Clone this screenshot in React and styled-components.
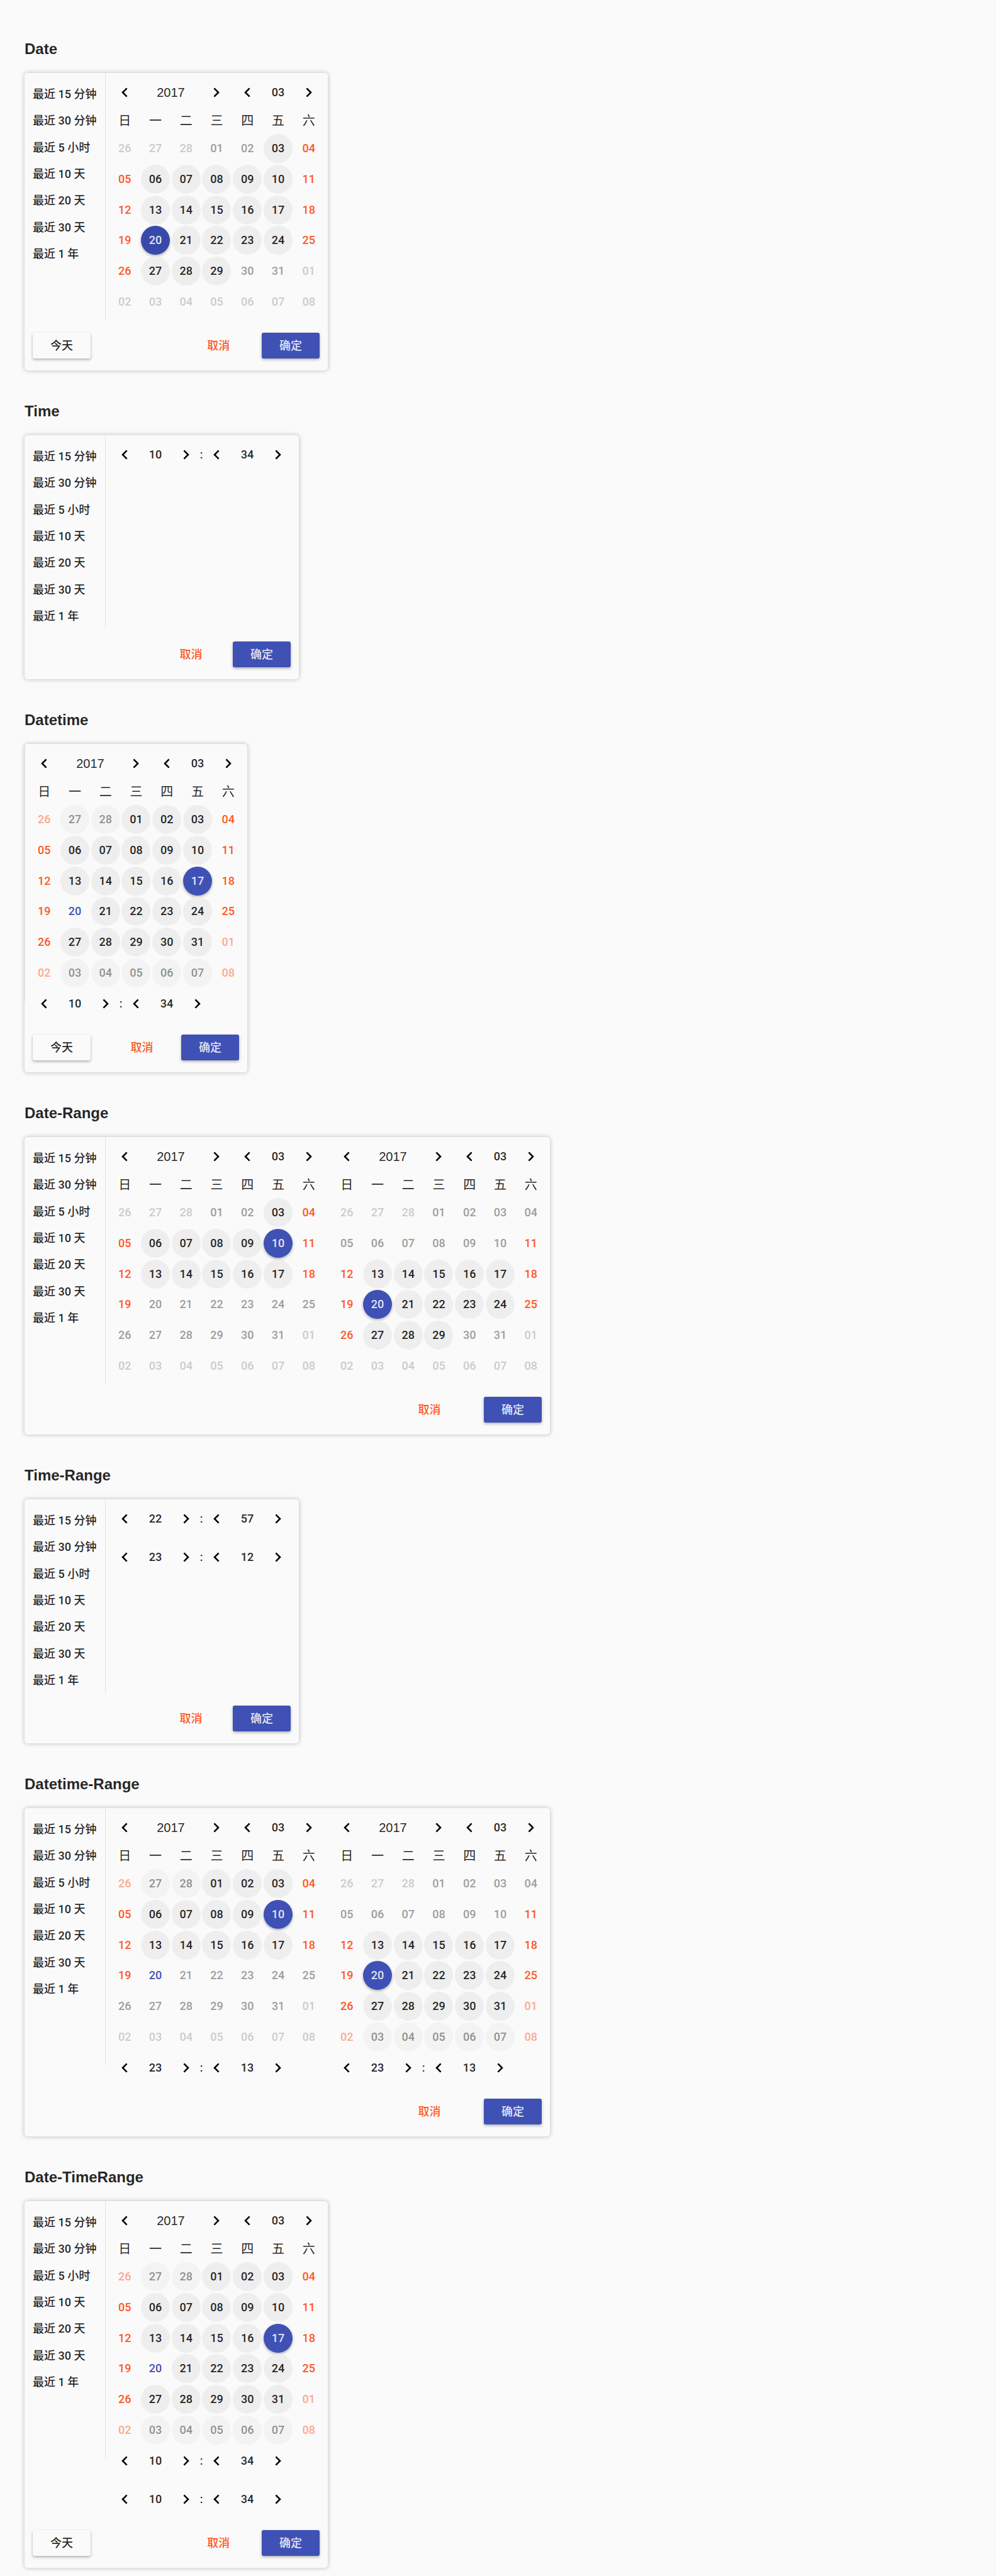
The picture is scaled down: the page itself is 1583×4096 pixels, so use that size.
import React, { useState } from "react";
import styled, { createGlobalStyle, css } from "styled-components";

const GlobalStyle = createGlobalStyle`
  *, *::before, *::after { box-sizing: border-box; }
  body {
    margin: 0;
    background: #fafafa;
    color: rgba(0, 0, 0, 0.87);
    font-family: Roboto, "Noto Sans CJK SC", sans-serif;
    font-size: 18px;
    font-weight: 500;
  }
  button {
    font: inherit;
    color: inherit;
    background: none;
    border: 0;
    padding: 0;
    cursor: pointer;
  }
`;

const Page = styled.main`
  display: flex;
  flex-direction: column;
  gap: 42px;
  padding: 55px 39px 13px;
`;

const Section = styled.section`
  display: flex;
  flex-direction: column;
  align-items: flex-start;
`;

const Title = styled.h2`
  margin: 0;
  height: 61px;
  padding-top: 9px;
  font-family: "Liberation Sans", sans-serif;
  font-size: 24px;
  line-height: 28px;
  font-weight: 700;
`;

const Card = styled.div`
  border-radius: 5px;
  background: #fafafa;
  box-shadow: 0 0 6px 1px rgba(0, 0, 0, 0.2);
`;

const Body = styled.div`
  display: flex;
  align-items: flex-start;
`;

const Sidebar = styled.div`
  min-height: ${(p) => p.$height}px;
  border-right: 1px solid #e3e3e3;
`;

const Shortcuts = styled.ul`
  width: 128px;
  height: 309px;
  margin: 0;
  padding: 13px 0 0 13px;
  list-style: none;
  display: grid;
  grid-template-rows: repeat(7, 1fr);
  align-items: center;
`;

const Shortcut = styled.button`
  white-space: nowrap;
  line-height: 24px;
`;

const Panels = styled.div`
  display: flex;
`;

const Month = styled.div`
  width: 353px;
  padding: 6px 6px ${(p) => (p.$joined ? 0 : 6)}px;
`;

const MonthHeader = styled.div`
  display: grid;
  grid-template-columns: repeat(7, 1fr);
  height: 50px;
  align-items: center;
  justify-items: center;
`;

const Year = styled.span`
  grid-column: span 2;
  font-family: "Liberation Sans", sans-serif;
  font-size: 20px;
  font-weight: 400;
`;

const Value = styled.span`
  line-height: 24px;
`;

const ArrowButton = styled.button`
  display: flex;
  align-items: center;
  justify-content: center;
  width: 46px;
  height: 46px;
  color: #000;
`;

const Calendar = styled.table`
  display: block;
`;

const WeekHead = styled.thead`
  display: grid;
  height: 40px;
  font-size: 20px;
`;

const Weeks = styled.tbody`
  display: grid;
  grid-template-rows: repeat(6, 1fr);
  height: 292px;
`;

const Week = styled.tr`
  display: grid;
  grid-template-columns: repeat(7, 1fr);
  align-items: center;
  justify-items: center;
`;

const WeekDay = styled.th`
  padding: 0;
  font-weight: 400;
  line-height: 24px;
`;

const DayCell = styled.td`
  padding: 0;
`;

const dayKinds = {
  work: css`
    background: #eee;
  `,
  rest: css`
    color: #ff5722;
  `,
  today: css`
    color: #3f51b5;
  `,
  off: css`
    color: #9d9d9d;
  `,
  picked: css`
    background: #3f51b5;
    color: rgba(255, 255, 255, 0.87);
    box-shadow: 0 2px 4px rgba(0, 0, 0, 0.3);
  `,
  focused: css`
    background: #3949ab;
    color: rgba(255, 255, 255, 0.87);
    box-shadow: 0 2px 4px rgba(0, 0, 0, 0.3);
  `,
};

const Day = styled.button`
  display: block;
  width: 46px;
  height: 46px;
  border-radius: 50%;
  line-height: 24px;
  opacity: ${(p) => (p.$outside ? 0.5 : 1)};
  ${(p) => dayKinds[p.$kind]}
`;

const TimeBlock = styled.div`
  padding: ${(p) => (p.$joined ? 0 : 6)}px 9px 6px 6px;
`;

const TimeRow = styled.div`
  display: flex;
  width: 292px;
  height: 49px;
`;

const Spinner = styled.div`
  flex: 1;
  display: grid;
  grid-template-columns: repeat(3, 1fr);
  align-items: center;
  justify-items: center;
`;

const Colon = styled.span`
  width: 0;
  display: flex;
  align-items: center;
  justify-content: center;
`;

const Footer = styled.div`
  display: flex;
  align-items: center;
  padding: 19px 13px;
`;

const Action = styled.button`
  width: 92px;
  height: 41px;
  border-radius: 3px;
  line-height: 24px;
`;

const TodayButton = styled(Action)`
  box-shadow: 0 2px 4px rgba(0, 0, 0, 0.3);
`;

const CancelButton = styled(Action)`
  margin-left: auto;
  color: #ff5722;
`;

const ConfirmButton = styled(Action)`
  margin-left: 5%;
  background: #3f51b5;
  color: rgba(255, 255, 255, 0.87);
  box-shadow: 0 2px 4px rgba(0, 0, 0, 0.3);
`;

const SHORTCUTS = [
  "最近 15 分钟",
  "最近 30 分钟",
  "最近 5 小时",
  "最近 10 天",
  "最近 20 天",
  "最近 30 天",
  "最近 1 年",
];

const WEEKDAYS = ["日", "一", "二", "三", "四", "五", "六"];

const pad = (n) => String(n).padStart(2, "0");

/* March 2017 starts on a Wednesday: the grid opens with three February days. */
const buildDays = ({ picked, from = -9, to = 99, today, focused }) =>
  Array.from({ length: 42 }, (_, i) => {
    const n = i - 2;
    const date = n < 1 ? n + 28 : n > 31 ? n - 31 : n;
    const column = i % 7;
    let kind = column === 0 || column === 6 ? "rest" : "work";
    if (n < from || n > to) kind = "off";
    if (n === today) kind = "today";
    if (n === picked) kind = focused ? "focused" : "picked";
    return { n, date, kind, outside: n < 1 || n > 31 };
  });

const Arrow = ({ next, label }) => (
  <ArrowButton type="button" aria-label={label}>
    <svg width="10" height="16" viewBox="0 0 10 16" fill="none" stroke="currentColor" strokeWidth="2.6">
      <path d={next ? "M1.4 1.4 8 8l-6.6 6.6" : "M8.6 1.4 2 8l6.6 6.6"} />
    </svg>
  </ArrowButton>
);

function MonthPanel({ month }) {
  const days = buildDays(month);
  return (
    <>
      <MonthHeader>
        <Arrow label="上一年" />
        <Year>2017</Year>
        <Arrow next label="下一年" />
        <Arrow label="上个月" />
        <Value>03</Value>
        <Arrow next label="下个月" />
      </MonthHeader>
      <Calendar>
        <WeekHead>
          <Week>
            {WEEKDAYS.map((d) => (
              <WeekDay key={d} scope="col">
                {d}
              </WeekDay>
            ))}
          </Week>
        </WeekHead>
        <Weeks>
          {[0, 1, 2, 3, 4, 5].map((w) => (
            <Week key={w}>
              {days.slice(w * 7, w * 7 + 7).map((d) => (
                <DayCell key={d.n}>
                  <Day type="button" $kind={d.kind} $outside={d.outside}>
                    {pad(d.date)}
                  </Day>
                </DayCell>
              ))}
            </Week>
          ))}
        </Weeks>
      </Calendar>
    </>
  );
}

function TimeSpinner({ initial, max, unit }) {
  const [value, setValue] = useState(initial);
  const step = (by) => () => setValue((v) => (v + by + max) % max);
  return (
    <Spinner>
      <span onClick={step(-1)}>
        <Arrow label={`减少${unit}`} />
      </span>
      <Value>{pad(value)}</Value>
      <span onClick={step(1)}>
        <Arrow next label={`增加${unit}`} />
      </span>
    </Spinner>
  );
}

const Time = ({ value }) => (
  <TimeRow>
    <TimeSpinner initial={value[0]} max={24} unit="小时" />
    <Colon>:</Colon>
    <TimeSpinner initial={value[1]} max={60} unit="分钟" />
  </TimeRow>
);

const PICKERS = [
  { title: "Date", height: 394, today: true, panels: [{ month: { picked: 20, from: 3, to: 29, focused: true } }] },
  { title: "Time", height: 309, panels: [{ times: [[10, 34]] }] },
  {
    title: "Datetime",
    height: 409,
    today: true,
    plain: true,
    panels: [{ month: { picked: 17, today: 20 }, times: [[10, 34]] }],
  },
  {
    title: "Date-Range",
    height: 394,
    panels: [
      { month: { picked: 10, from: 3, to: 19 } },
      { month: { picked: 20, from: 11, to: 29 } },
    ],
  },
  { title: "Time-Range", height: 309, panels: [{ times: [[22, 57], [23, 12]] }] },
  {
    title: "Datetime-Range",
    height: 409,
    panels: [
      { month: { picked: 10, to: 19, today: 20 }, times: [[23, 13]] },
      { month: { picked: 20, from: 11 }, times: [[23, 13]] },
    ],
  },
  {
    title: "Date-TimeRange",
    height: 409,
    today: true,
    panels: [{ month: { picked: 17, today: 20 }, times: [[10, 34], [10, 34]] }],
  },
];

function Picker({ title, height, today, plain, panels }) {
  return (
    <Section>
      <Title>{title}</Title>
      <Card>
        <Body>
          <Sidebar $height={height}>
            {!plain && (
              <Shortcuts>
                {SHORTCUTS.map((s) => (
                  <li key={s}>
                    <Shortcut type="button">{s}</Shortcut>
                  </li>
                ))}
              </Shortcuts>
            )}
          </Sidebar>
          <Panels>
            {panels.map(({ month, times = [] }, i) => (
              <div key={i}>
                {month && (
                  <Month $joined={times.length > 0}>
                    <MonthPanel month={month} />
                  </Month>
                )}
                {times.map((t, j) => (
                  <TimeBlock key={j} $joined={Boolean(month) && j === 0}>
                    <Time value={t} />
                  </TimeBlock>
                ))}
              </div>
            ))}
          </Panels>
        </Body>
        <Footer>
          {today && <TodayButton type="button">今天</TodayButton>}
          <CancelButton type="button">取消</CancelButton>
          <ConfirmButton type="button">确定</ConfirmButton>
        </Footer>
      </Card>
    </Section>
  );
}

export default function App() {
  return (
    <>
      <GlobalStyle />
      <Page>
        {PICKERS.map((p) => (
          <Picker key={p.title} {...p} />
        ))}
      </Page>
    </>
  );
}
